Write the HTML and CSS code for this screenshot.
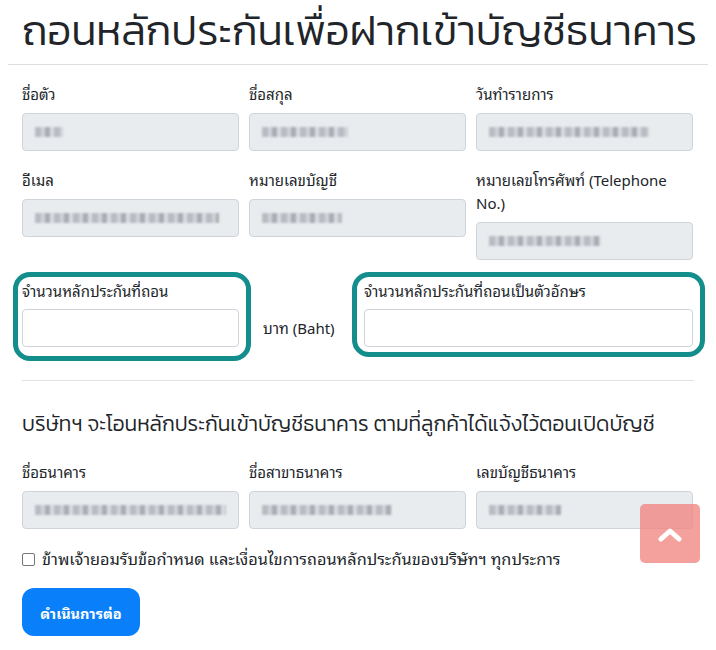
FILE: index.html
```html
<!DOCTYPE html>
<html lang="th">
<head>
<meta charset="utf-8">
<title>ถอนหลักประกัน</title>
<link rel="stylesheet" href="styles.css">
</head>
<body>
<div class="page">
  <h1 class="title">ถอนหลักประกันเพื่อฝากเข้าบัญชีธนาคาร</h1>
  <hr class="rule">
  <div class="content">
    <div class="grid">
      <div class="field">
        <label class="label">ชื่อตัว</label>
        <div class="input ro"><span class="blur" style="width:28px"></span></div>
      </div>
      <div class="field">
        <label class="label">ชื่อสกุล</label>
        <div class="input ro"><span class="blur" style="width:86px"></span></div>
      </div>
      <div class="field">
        <label class="label">วันทำรายการ</label>
        <div class="input ro"><span class="blur" style="width:160px"></span></div>
      </div>
      <div class="field">
        <label class="label">อีเมล</label>
        <div class="input ro"><span class="blur" style="width:184px"></span></div>
      </div>
      <div class="field">
        <label class="label">หมายเลขบัญชี</label>
        <div class="input ro"><span class="blur" style="width:80px"></span></div>
      </div>
      <div class="field">
        <label class="label">หมายเลขโทรศัพท์ (Telephone No.)</label>
        <div class="input ro"><span class="blur" style="width:112px"></span></div>
      </div>
    </div>

    <div class="amount-row">
      <div class="hl hl-left">
        <label class="label">จำนวนหลักประกันที่ถอน</label>
        <div class="input"></div>
      </div>
      <div class="unit">บาท (Baht)</div>
      <div class="hl hl-right">
        <label class="label">จำนวนหลักประกันที่ถอนเป็นตัวอักษร</label>
        <div class="input"></div>
      </div>
    </div>

    <hr class="rule2">

    <h2 class="subtitle">บริษัทฯ จะโอนหลักประกันเข้าบัญชีธนาคาร ตามที่ลูกค้าได้แจ้งไว้ตอนเปิดบัญชี</h2>

    <div class="grid grid-bank">
      <div class="field">
        <label class="label">ชื่อธนาคาร</label>
        <div class="input ro"><span class="blur" style="width:192px"></span></div>
      </div>
      <div class="field">
        <label class="label">ชื่อสาขาธนาคาร</label>
        <div class="input ro"><span class="blur" style="width:130px"></span></div>
      </div>
      <div class="field">
        <label class="label">เลขบัญชีธนาคาร</label>
        <div class="input ro"><span class="blur" style="width:72px"></span></div>
      </div>
    </div>

    <label class="check"><span class="box"></span>ข้าพเจ้ายอมรับข้อกำหนด และเงื่อนไขการถอนหลักประกันของบริษัทฯ ทุกประการ</label>

    <button class="btn">ดำเนินการต่อ</button>
  </div>
</div>
<a class="totop" href="#"><svg width="24" height="16" viewBox="0 0 24 16"><path d="M3 13 L12 5 L21 13" fill="none" stroke="#fff" stroke-width="5" stroke-linecap="round" stroke-linejoin="round"/></svg></a>
</body>
</html>
```
FILE: styles.css
```css
* { box-sizing: border-box; }
body {
  margin: 0;
  background: #fff;
  color: #212529;
  font-family: "Noto Sans", "Noto Sans Thai Looped", sans-serif;
  font-size: 15px;
  line-height: 23px;
}
.page { padding: 0 8px; }
.title {
  margin: 0;
  padding: 0 0 0 14px;
  font-family: "Kanit", "Noto Sans Thai", sans-serif;
  font-size: 42px;
  font-weight: 300;
  line-height: 62px;
  color: #212529;
  white-space: nowrap;
}
.rule {
  margin: 2px 0 0;
  border: 0;
  border-top: 1px solid #ddd;
}
.content { padding: 0 14px; }
.grid {
  display: grid;
  grid-template-columns: 217px 217px 217px;
  column-gap: 10px;
  row-gap: 18px;
  padding-top: 18px;
  width: 672px;
}
.label {
  display: block;
  margin-bottom: 7px;
  color: #212529;
}
.input {
  height: 38px;
  border: 1px solid #ced4da;
  border-radius: 4px;
  background: #fff;
  display: flex;
  align-items: center;
  padding: 0 12px;
}
.input.ro { background: #e9ecef; }
.blur {
  display: block;
  height: 10px;
  background: repeating-linear-gradient(90deg, #b8bcc2 0 6px, #cfd3d8 6px 10px, #a9adb3 10px 15px, #d8dbdf 15px 19px);
  filter: blur(1px);
}
.amount-row {
  display: flex;
  align-items: flex-start;
  margin-top: 12px;
  margin-left: -9px;
}
.hl {
  flex-shrink: 0;
  border: 5px solid #148e8c;
  border-radius: 17px;
}
.hl-left { width: 238px; padding: 3px 7px 9px 4px; }
.hl-right { width: 353px; padding: 3px 7px 5px 7px; }
.hl .label { margin-bottom: 6px; }
.unit {
  flex-shrink: 0;
  width: 101px;
  padding-left: 12px;
  padding-top: 45px;
  white-space: nowrap;
}
.rule2 {
  margin: 19px 0 0;
  border: 0;
  border-top: 1px solid #e2e2e2;
}
.subtitle {
  margin: 27px 0 0;
  font-family: "Kanit", "Noto Sans Thai", sans-serif;
  font-size: 21px;
  font-weight: 300;
  color: #212529;
  line-height: 32px;
  white-space: nowrap;
}
.grid-bank { padding-top: 21px; }
.check {
  display: flex;
  align-items: center;
  margin-top: 19px;
  font-size: 16.3px;
  color: #212529;
}
.box {
  width: 13px;
  height: 13px;
  border: 1px solid #767676;
  border-radius: 2px;
  margin-right: 7px;
  background: #fff;
}
.btn {
  display: block;
  margin-top: 17px;
  height: 48px;
  width: 118px;
  padding: 0;
  border: 0;
  border-radius: 12px;
  background: #0a7ffa;
  color: #fff;
  font-family: inherit;
  font-size: 14.5px;
  font-weight: 700;
}
.totop {
  position: fixed;
  left: 640px;
  top: 504px;
  width: 60px;
  height: 59px;
  border-radius: 5px;
  background: rgba(240, 128, 124, 0.75);
  display: flex;
  align-items: center;
  justify-content: center;
}
```
